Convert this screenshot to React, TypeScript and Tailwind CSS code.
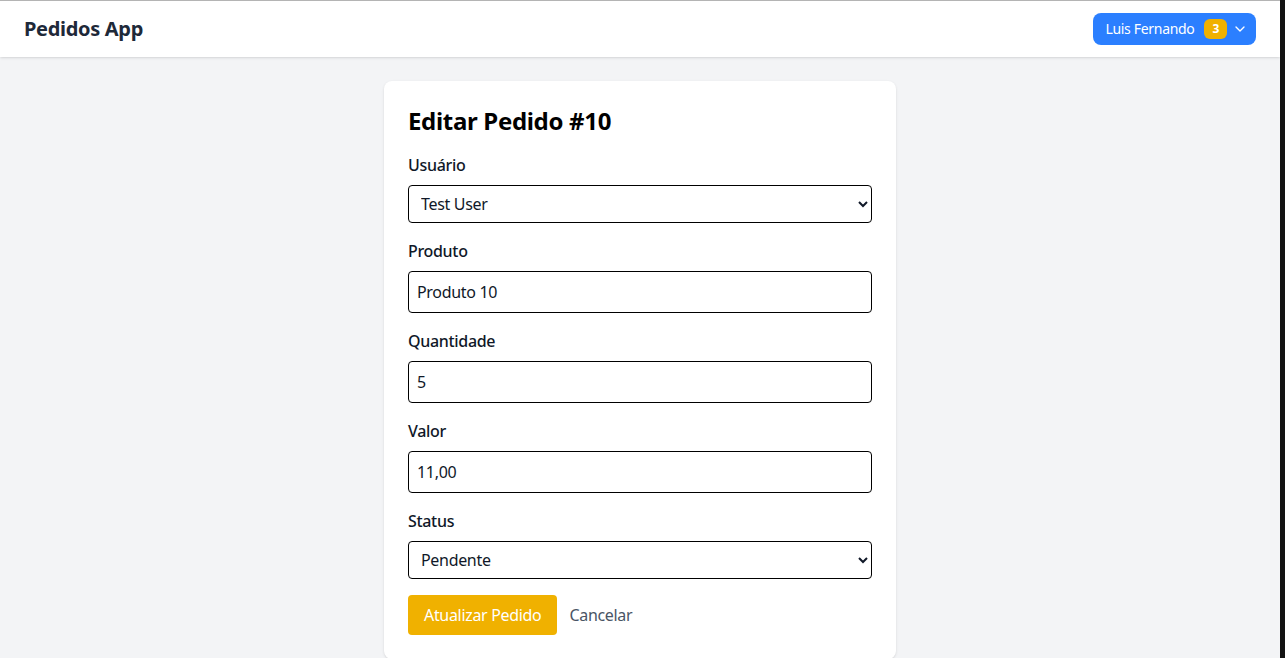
import React, { useState } from 'react';

const usuarios = ['Test User', 'Luis Fernando'];
const statusOptions = ['Pendente', 'Em andamento', 'Concluído', 'Cancelado'];

function Field({ label, children }: { label: string; children: React.ReactNode }) {
  return (
    <div>
      <label className="mb-2 block font-medium text-gray-900">{label}</label>
      {children}
    </div>
  );
}

export default function App() {
  const [usuario, setUsuario] = useState('Test User');
  const [produto, setProduto] = useState('Produto 10');
  const [quantidade, setQuantidade] = useState('5');
  const [valor, setValor] = useState('11,00');
  const [status, setStatus] = useState('Pendente');

  const inputClass =
    'block w-full rounded border border-black bg-white p-2 text-gray-900 outline-none';

  return (
    <div
      className="flex h-[658px] w-[1285px] overflow-hidden tracking-[-0.02em]"
      style={{ fontFamily: '"Noto Sans", "Open Sans", sans-serif' }}
    >
      <div className="flex w-[1280px] flex-col bg-gray-100">
        {/* Header */}
        <header className="flex h-[57px] shrink-0 items-center justify-between border-t border-[#b4b4b4] bg-white px-6 shadow-sm">
          <h1 className="text-xl font-bold text-gray-800">Pedidos App</h1>

          <button
            type="button"
            className="flex h-8 items-center rounded-lg bg-blue-500 pl-3 pr-2 text-sm text-white"
          >
            <span>Luis Fernando</span>
            <span className="ml-2.5 rounded-md bg-yellow-500 px-2 text-xs font-bold leading-5">3</span>
            <svg className="ml-[5px] h-4 w-4" viewBox="0 0 24 24" fill="none" stroke="currentColor" strokeWidth="2" strokeLinecap="round" strokeLinejoin="round">
              <path d="m6 9 6 6 6-6" />
            </svg>
          </button>
        </header>

        {/* Main */}
        <main className="flex flex-1 justify-center pt-6">
          <div className="w-[512px] rounded-lg bg-white p-6 shadow-sm">
            <h2 className="mb-4 text-2xl font-bold text-black">Editar Pedido #10</h2>

            <form className="space-y-4" onSubmit={(e) => e.preventDefault()}>
              <Field label="Usuário">
                <select
                  value={usuario}
                  onChange={(e) => setUsuario(e.target.value)}
                  className={`${inputClass} h-[38px] py-0`}
                >
                  {usuarios.map((u) => (
                    <option key={u}>{u}</option>
                  ))}
                </select>
              </Field>

              <Field label="Produto">
                <input value={produto} onChange={(e) => setProduto(e.target.value)} className={inputClass} />
              </Field>

              <Field label="Quantidade">
                <input value={quantidade} onChange={(e) => setQuantidade(e.target.value)} className={inputClass} />
              </Field>

              <Field label="Valor">
                <input value={valor} onChange={(e) => setValor(e.target.value)} className={inputClass} />
              </Field>

              <Field label="Status">
                <select
                  value={status}
                  onChange={(e) => setStatus(e.target.value)}
                  className={`${inputClass} h-[38px] py-0`}
                >
                  {statusOptions.map((s) => (
                    <option key={s}>{s}</option>
                  ))}
                </select>
              </Field>

              <div className="flex items-center">
                <button type="submit" className="rounded bg-yellow-500 px-4 py-2 text-white">
                  Atualizar Pedido
                </button>
                <button type="button" className="ml-3 text-gray-600">
                  Cancelar
                </button>
              </div>
            </form>
          </div>
        </main>
      </div>
      <div className="w-[5px] shrink-0 bg-[#121212]" />
    </div>
  );
}
